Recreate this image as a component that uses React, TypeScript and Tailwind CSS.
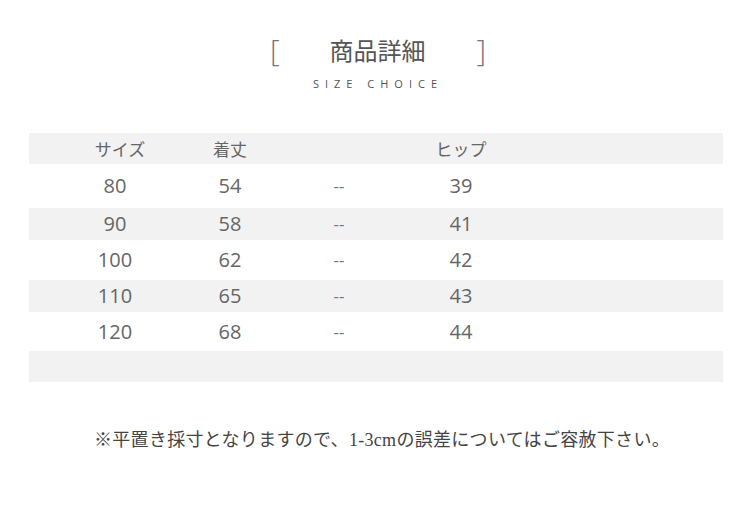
const data = [
  { size: "80", len: "54", hip: "39", h: "h-[44px]", bg: "bg-white" },
  { size: "90", len: "58", hip: "41", h: "h-[32px]", bg: "bg-[#f2f2f2]" },
  { size: "100", len: "62", hip: "42", h: "h-[40px]", bg: "bg-white" },
  { size: "110", len: "65", hip: "43", h: "h-[32px]", bg: "bg-[#f2f2f2]" },
  { size: "120", len: "68", hip: "44", h: "h-[39px]", bg: "bg-white" },
];

const cols = "grid grid-cols-[172px_58px_160px_84px_1fr] items-center";

export default function App() {
  return (
    <div
      className="w-[750px] h-[510px] bg-white text-[#666]"
      style={{ fontFamily: '"Open Sans", "Noto Sans CJK JP", sans-serif' }}
    >
      {/* タイトル */}
      <div className="pt-[34px] flex flex-col items-center">
        <div className="flex items-center w-[216px] text-[#555] ml-[6px]">
          <span className="text-[30px] leading-[32px] font-light text-[#777]">[</span>
          <span
            className="text-[24px] leading-[28px] ml-[50px]"
            style={{ fontFamily: '"Noto Sans CJK JP", sans-serif' }}
          >
            商品詳細
          </span>
          <span className="text-[30px] leading-[32px] font-light text-[#777] ml-auto">]</span>
        </div>
        <div className="mt-[11px] ml-[6px] text-[11px] leading-[14px] tracking-[6px] text-[#555]">
          SIZE CHOICE
        </div>
      </div>

      {/* サイズ表 */}
      <div className="mt-[42px] mx-[29px] w-[694px]">
        <div
          className={`${cols} h-[31px] bg-[#f2f2f2] text-[17px]`}
          style={{ fontFamily: '"Noto Sans CJK JP", sans-serif' }}
        >
          <span className="text-center pl-[10px]">サイズ</span>
          <span className="text-center">着丈</span>
          <span />
          <span className="text-center">ヒップ</span>
          <span />
        </div>
        {data.map((r) => (
          <div key={r.size} className={`${cols} ${r.h} ${r.bg} text-[20px]`}>
            <span className="text-center">{r.size}</span>
            <span className="text-center">{r.len}</span>
            <span className="text-center text-[17px] text-[#777]">--</span>
            <span className="text-center">{r.hip}</span>
            <span />
          </div>
        ))}
        <div className="h-[31px] bg-[#f2f2f2]" />
      </div>

      {/* 注意書き */}
      <p
        className="mt-[46px] text-center text-[18px] leading-[24px] tracking-[0.3px] text-[#444] pl-[14px]"
        style={{ fontFamily: '"Liberation Serif", "Noto Sans CJK JP", serif' }}
      >
        ※平置き採寸となりますので、1-3cmの誤差についてはご容赦下さい。
      </p>
    </div>
  );
}
